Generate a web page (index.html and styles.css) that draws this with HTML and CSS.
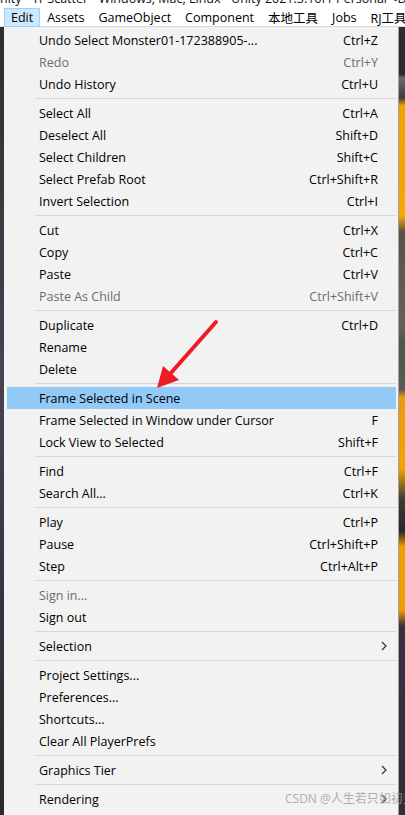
FILE: index.html
```html
<!DOCTYPE html>
<html>
<head>
<meta charset="utf-8">
<link rel="stylesheet" href="styles.css">
</head>
<body>
<div class="title"><span class="title-text">nity - Tr Scatter - Windows, Mac, Linux - Unity 2021.3.16f1 Personal &lt;DX11&gt;</span></div>
<div class="menubar">
  <span class="mb-item active">Edit</span>
  <span class="mb-item">Assets</span>
  <span class="mb-item">GameObject</span>
  <span class="mb-item">Component</span>
  <span class="mb-item">本地工具</span>
  <span class="mb-item">Jobs</span>
  <span class="mb-item">RJ工具</span>
</div>
<div class="main">
  <div class="strip-left"></div>
  <div class="menu">
    <div class="row"><span class="label">Undo Select Monster01-172388905-...</span><span class="key">Ctrl+Z</span></div>
    <div class="row disabled"><span class="label">Redo</span><span class="key">Ctrl+Y</span></div>
    <div class="row"><span class="label">Undo History</span><span class="key">Ctrl+U</span></div>
    <div class="sep"></div>
    <div class="row"><span class="label">Select All</span><span class="key">Ctrl+A</span></div>
    <div class="row"><span class="label">Deselect All</span><span class="key">Shift+D</span></div>
    <div class="row"><span class="label">Select Children</span><span class="key">Shift+C</span></div>
    <div class="row"><span class="label">Select Prefab Root</span><span class="key">Ctrl+Shift+R</span></div>
    <div class="row"><span class="label">Invert Selection</span><span class="key">Ctrl+I</span></div>
    <div class="sep"></div>
    <div class="row"><span class="label">Cut</span><span class="key">Ctrl+X</span></div>
    <div class="row"><span class="label">Copy</span><span class="key">Ctrl+C</span></div>
    <div class="row"><span class="label">Paste</span><span class="key">Ctrl+V</span></div>
    <div class="row disabled"><span class="label">Paste As Child</span><span class="key">Ctrl+Shift+V</span></div>
    <div class="sep"></div>
    <div class="row"><span class="label">Duplicate</span><span class="key">Ctrl+D</span></div>
    <div class="row"><span class="label">Rename</span></div>
    <div class="row"><span class="label">Delete</span></div>
    <div class="sep"></div>
    <div class="row hl"><span class="label">Frame Selected in Scene</span></div>
    <div class="row"><span class="label">Frame Selected in Window under Cursor</span><span class="key">F</span></div>
    <div class="row"><span class="label">Lock View to Selected</span><span class="key">Shift+F</span></div>
    <div class="sep"></div>
    <div class="row"><span class="label">Find</span><span class="key">Ctrl+F</span></div>
    <div class="row"><span class="label">Search All...</span><span class="key">Ctrl+K</span></div>
    <div class="sep"></div>
    <div class="row"><span class="label">Play</span><span class="key">Ctrl+P</span></div>
    <div class="row"><span class="label">Pause</span><span class="key">Ctrl+Shift+P</span></div>
    <div class="row"><span class="label">Step</span><span class="key">Ctrl+Alt+P</span></div>
    <div class="sep"></div>
    <div class="row disabled"><span class="label">Sign in...</span></div>
    <div class="row"><span class="label">Sign out</span></div>
    <div class="sep"></div>
    <div class="row sub"><span class="label">Selection</span><svg class="chev" viewBox="0 0 6 10" width="6" height="10"><path d="M1 1 L5 5 L1 9" fill="none" stroke="#333" stroke-width="1.2"/></svg></div>
    <div class="sep"></div>
    <div class="row"><span class="label">Project Settings...</span></div>
    <div class="row"><span class="label">Preferences...</span></div>
    <div class="row"><span class="label">Shortcuts...</span></div>
    <div class="row"><span class="label">Clear All PlayerPrefs</span></div>
    <div class="sep"></div>
    <div class="row sub"><span class="label">Graphics Tier</span><svg class="chev" viewBox="0 0 6 10" width="6" height="10"><path d="M1 1 L5 5 L1 9" fill="none" stroke="#333" stroke-width="1.2"/></svg></div>
    <div class="sep"></div>
    <div class="row sub"><span class="label">Rendering</span><svg class="chev" viewBox="0 0 6 10" width="6" height="10"><path d="M1 1 L5 5 L1 9" fill="none" stroke="#333" stroke-width="1.2"/></svg></div>
  </div>
  <div class="strip-right"></div>
</div>
<svg class="arrow" width="405" height="815" viewBox="0 0 405 815">
  <line x1="216" y1="322" x2="170" y2="374" stroke="#ee1c25" stroke-width="4" stroke-linecap="round"/>
  <polygon points="157,388 163,366 179,380" fill="#ee1c25"/>
</svg>
<div class="watermark">CSDN @人生若只如初见♫</div>
</body>
</html>
```
FILE: styles.css
```css
* { box-sizing: border-box; }
html, body {
  margin: 0;
  padding: 0;
  width: 405px;
  height: 815px;
  overflow: hidden;
}
body {
  background: #2a2a2d;
  font-family: "Open Sans", "Noto Sans CJK SC", sans-serif;
  font-size: 12.5px;
  color: #000;
  position: relative;
}
.title {
  height: 7px;
  background: #fff;
  overflow: hidden;
  white-space: nowrap;
}
.title-text {
  display: block;
  margin-top: -9px;
  line-height: 16px;
  font-size: 12.5px;
  color: #111;
}
.menubar {
  display: flex;
  height: 20px;
  background: #fff;
  padding-left: 4px;
  white-space: nowrap;
  border-bottom: 1px solid #d9d9d9;
}
.mb-item {
  display: flex;
  align-items: center;
  padding: 0 7px;
  height: 19px;
  margin-top: 1px;
  font-size: 12.5px;
}
.mb-item.active {
  background: #cce8ff;
  outline: 1px solid #99d1ff;
  outline-offset: -1px;
}
.main {
  display: flex;
  height: 788px;
}
.strip-left {
  width: 4px;
  background: linear-gradient(#2e2c30 0, #3b3740 20%, #4a4250 45%, #3a3440 70%, #2b2830 100%);
}
.strip-right {
  flex: 1;
  background: linear-gradient(#2b2b2b 0, #2b2b2b 6%, #6b6b6b 6.5%, #3c3c3c 9%, #f2a100 10%, #f5a800 24%, #5a5048 26%, #676058 38%, #4a5a48 40%, #5a5a50 46%, #e89a10 47%, #f3a400 56%, #3a3a3a 60%, #282828 64%, #f2a000 66%, #ef9c00 74%, #3a3040 76%, #342c38 100%);
}
.menu {
  width: 395px;
  background: #f2f2f2;
  padding: 2px 2px 2px 3px;
  border-right: 1px solid #a0a0a0;
  white-space: nowrap;
}
.row {
  display: flex;
  align-items: center;
  height: 22px;
  padding: 0 18px 0 32px;
}
.row .label { flex: 1; }
.row .key { text-align: right; }
.row.disabled { color: #6d6d6d; }
.row.hl { background: #91c9f7; }
.row.sub { padding-right: 9px; }
.chev { display: block; }
.sep {
  height: 7px;
  margin-left: 28px;
  border-top: 3px solid #f2f2f2;
  border-bottom: 3px solid #f2f2f2;
  background: #d7d7d7;
}
.arrow {
  position: absolute;
  left: 0;
  top: 0;
  pointer-events: none;
}
.watermark {
  position: absolute;
  left: 285px;
  top: 789px;
  font-size: 12px;
  color: rgba(160, 160, 160, 0.85);
  white-space: nowrap;
}
```
